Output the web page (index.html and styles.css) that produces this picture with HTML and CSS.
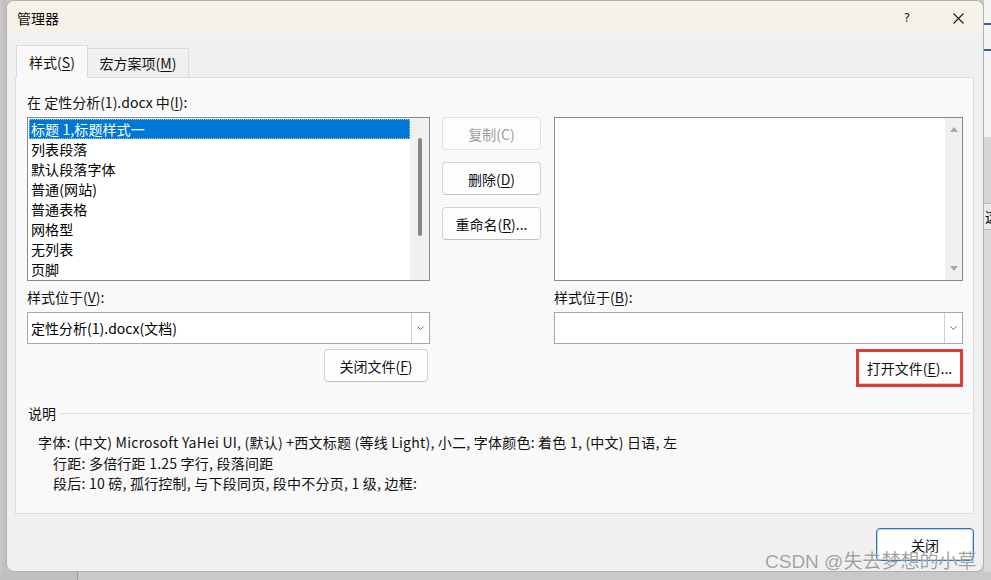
FILE: index.html
```html
<!DOCTYPE html>
<html lang="zh-CN">
<head>
<meta charset="utf-8">
<title>管理器</title>
<link rel="stylesheet" href="styles.css">
</head>
<body>
<div class="desk">
  <div class="main-row">
    <div class="strip-left"></div>
    <div class="dialog">
      <div class="titlebar">
        <span class="title">管理器</span>
        <span class="capbtn help">?</span>
        <span class="capbtn close-x">
          <svg width="11" height="11" viewBox="0 0 11 11"><path d="M0.5 0.5 L10.5 10.5 M10.5 0.5 L0.5 10.5" stroke="#1a1a1a" stroke-width="1.1" fill="none"/></svg>
        </span>
      </div>
      <div class="dbody">
        <div class="tabs">
          <div class="tab active">样式(<u>S</u>)</div>
          <div class="tab inactive">宏方案项(<u>M</u>)</div>
        </div>
        <div class="panel">
          <div class="grid">
            <div class="lbl c1 r1">在 定性分析(1).docx 中(<u>I</u>):</div>

            <div class="listbox c1 r2">
              <div class="items">
                <div class="item sel">标题 1,标题样式一</div>
                <div class="item">列表段落</div>
                <div class="item">默认段落字体</div>
                <div class="item">普通(网站)</div>
                <div class="item">普通表格</div>
                <div class="item">网格型</div>
                <div class="item">无列表</div>
                <div class="item">页脚</div>
              </div>
              <div class="vscroll">
                <div class="thumb"></div>
              </div>
            </div>

            <div class="midbtns c2 r2">
              <div class="btn disabled">复制(C)</div>
              <div class="btn">删除(<u>D</u>)</div>
              <div class="btn">重命名(<u>R</u>)...</div>
            </div>

            <div class="listbox c3 r2">
              <div class="items"></div>
              <div class="vscroll arrows">
                <span class="tri up"></span>
                <span class="tri down"></span>
              </div>
            </div>

            <div class="lbl c1 r3">样式位于(<u>V</u>):</div>
            <div class="lbl c3 r3">样式位于(<u>B</u>):</div>

            <div class="combo c1 r4">
              <span class="combo-text">定性分析(1).docx(文档)</span>
              <span class="drop"><svg width="7" height="4" viewBox="0 0 7 4"><path d="M0.5 0.5 L3.5 3.5 L6.5 0.5" stroke="#6a6a6a" stroke-width="1" fill="none"/></svg></span>
            </div>
            <div class="combo c3 r4">
              <span class="combo-text"></span>
              <span class="drop"><svg width="7" height="4" viewBox="0 0 7 4"><path d="M0.5 0.5 L3.5 3.5 L6.5 0.5" stroke="#6a6a6a" stroke-width="1" fill="none"/></svg></span>
            </div>

            <div class="c1 r5 btncell">
              <div class="btn closefile">关闭文件(<u>F</u>)</div>
            </div>
            <div class="c3 r5 btncell">
              <div class="redbox"><div class="btn openfile">打开文件(<u>E</u>)...</div></div>
            </div>
          </div>

          <div class="group">
            <div class="group-head"><span>说明</span><span class="gline"></span></div>
            <div class="desc">
              <div class="dl">字体: (中文) Microsoft YaHei UI, (默认) +西文标题 (等线 Light), 小二, 字体颜色: 着色 1, (中文) 日语, 左</div>
              <div class="dl indent">行距: 多倍行距 1.25 字行, 段落间距</div>
              <div class="dl indent">段后: 10 磅, 孤行控制, 与下段同页, 段中不分页, 1 级, 边框:</div>
            </div>
          </div>
        </div>
        <div class="footer">
          <div class="btn primary">关闭</div>
        </div>
      </div>
    </div>
    <div class="strip-right">
      <div class="sr a"></div>
      <div class="sr line"></div>
      <div class="sr b"></div>
      <div class="sr line"></div>
      <div class="sr c"></div>
      <div class="sr d"></div>
      <div class="sr box">这</div>
      <div class="sr e"></div>
    </div>
  </div>
  <div class="bottom-row">
    <div class="bb1"></div>
    <div class="bb2"></div>
    <div class="bb3"></div>
  </div>
  <div class="watermark">CSDN @失去梦想的小草</div>
</div>
</body>
</html>
```

FILE: styles.css
```css
html, body {
  margin: 0;
  padding: 0;
}
body {
  width: 991px;
  height: 580px;
  overflow: hidden;
  background: #c6c6c6;
  font-family: "Noto Sans CJK SC", "Microsoft YaHei UI", sans-serif;
  font-size: 14px;
  color: #000;
}
u {
  text-decoration: underline;
  text-underline-offset: 2px;
  text-decoration-thickness: 1px;
}
.desk {
  position: relative;
  width: 991px;
  height: 580px;
  display: flex;
  flex-direction: column;
}
.main-row {
  display: flex;
  height: 572px;
}
.strip-left {
  width: 6px;
  background: linear-gradient(to right, #cacaca, #bdbdbd);
}
.dialog {
  width: 978px;
  height: 572px;
  box-sizing: border-box;
  border: 1px solid #b0b0b0;
  border-radius: 8px;
  background: #f0f0f0;
  overflow: hidden;
  display: flex;
  flex-direction: column;
}
.titlebar {
  height: 34px;
  flex: none;
  background: #f6f2ea;
  display: flex;
  align-items: center;
  padding-left: 10px;
}
.title {
  flex: 1;
  font-size: 14px;
  color: #111;
}
.capbtn {
  height: 34px;
  display: flex;
  align-items: center;
  justify-content: center;
}
.help {
  width: 52px;
  font-family: "DejaVu Sans", sans-serif;
  font-size: 12px;
  color: #1a1a1a;
}
.close-x {
  width: 50px;
}
.dbody {
  flex: 1;
  display: flex;
  flex-direction: column;
  padding: 10px 9px 0 8px;
}
.tabs {
  display: flex;
  align-items: flex-end;
  height: 33px;
  padding-left: 1px;
  margin-bottom: -1px;
  position: relative;
  z-index: 1;
}
.tab {
  box-sizing: border-box;
  border: 1px solid #dadada;
  border-bottom: none;
  display: flex;
  align-items: center;
  justify-content: center;
  color: #111;
}
.tab.active {
  width: 72px;
  height: 33px;
  background: #f9f9f9;
}
.tab.inactive {
  width: 102px;
  height: 29px;
  margin-bottom: 1px;
  margin-left: -1px;
  background: #f0f0f0;
}
.panel {
  height: 437px;
  box-sizing: border-box;
  border: 1px solid #dcdcdc;
  background: #f9f9f9;
  padding: 14px 10px 0 11px;
}
.grid {
  display: grid;
  grid-template-columns: 403px 12px 99px 13px 409px;
  grid-template-rows: 25px 170px 25px 37px 40px;
}
.c1 { grid-column: 1; }
.c2 { grid-column: 3; }
.c3 { grid-column: 5; }
.r1 { grid-row: 1; }
.r2 { grid-row: 2; }
.r3 { grid-row: 3; }
.r4 { grid-row: 4; }
.r5 { grid-row: 5; }
.lbl {
  height: 20px;
  line-height: 20px;
  color: #111;
}
.listbox {
  height: 164px;
  box-sizing: border-box;
  border: 1px solid #8a8a8e;
  background: #fff;
  display: flex;
}
.items {
  flex: 1;
  padding: 1px 0 0 1px;
}
.item {
  height: 20px;
  line-height: 20px;
  padding-left: 2px;
  white-space: nowrap;
  letter-spacing: 0.1px;
}
.item.sel {
  background: #0078d7;
  color: #fff;
  outline: 1px dotted #9cc2ea;
  outline-offset: -1px;
}
.vscroll {
  width: 19px;
  background: #f0f0f0;
  display: flex;
  flex-direction: column;
  align-items: center;
}
.thumb {
  margin-top: 20px;
  margin-left: 1px;
  width: 4px;
  height: 98px;
  border-radius: 2px;
  background: #868686;
}
.vscroll.arrows {
  width: 17px;
  justify-content: space-between;
  padding: 9px 0 9px;
  box-sizing: border-box;
}
.tri {
  width: 0;
  height: 0;
  border-left: 4px solid transparent;
  border-right: 4px solid transparent;
}
.tri.up {
  border-bottom: 5px solid #a8a8a8;
}
.tri.down {
  border-top: 5px solid #a8a8a8;
}
.midbtns {
  display: flex;
  flex-direction: column;
  gap: 12px;
}
.btn {
  box-sizing: border-box;
  height: 33px;
  border: 1px solid #d3d3d3;
  border-bottom-color: #c2c2c2;
  border-radius: 4px;
  background: #fdfdfd;
  display: flex;
  align-items: center;
  justify-content: center;
  color: #111;
  white-space: nowrap;
}
.btn.disabled {
  color: #9e9e9e;
  border-color: #e0e0e0;
}
.combo {
  height: 32px;
  box-sizing: border-box;
  border: 1px solid #a8a8a8;
  background: #fff;
  display: flex;
  align-items: stretch;
}
.combo-text {
  flex: 1;
  padding-left: 3px;
  line-height: 30px;
  white-space: nowrap;
}
.drop {
  width: 18px;
  box-sizing: border-box;
  border-left: 1px solid #cfcfcf;
  display: flex;
  align-items: center;
  justify-content: center;
}
.btncell {
  display: flex;
  justify-content: flex-end;
  align-items: flex-start;
}
.closefile {
  width: 104px;
  margin-right: 2px;
}
.redbox {
  width: 107px;
  height: 38px;
  box-sizing: border-box;
  border: 3px solid #e03c3c;
  background: #fdfdfd;
}
.openfile {
  height: 32px;
  border: none;
  border-bottom: 1px solid #d0d0d0;
  border-radius: 0;
}
.group {
  margin-top: 14px;
}
.group-head {
  display: flex;
  align-items: center;
  height: 20px;
  padding-left: 1px;
  margin-right: -7px;
  color: #111;
}
.gline {
  flex: 1;
  margin-left: 4px;
  border-top: 1px solid #dcdcdc;
}
.desc {
  margin-top: 9px;
  padding-left: 11px;
  color: #111;
}
.dl {
  height: 20.5px;
  line-height: 20.5px;
  white-space: nowrap;
  letter-spacing: 0.22px;
}
.dl.indent {
  padding-left: 15px;
}
.footer {
  display: flex;
  justify-content: flex-end;
  padding-top: 14px;
}
.btn.primary {
  width: 98px;
  background: #fff;
  border: 1px solid #2a72c4;
  box-shadow: inset 0 0 0 1px rgba(42, 114, 196, 0.3);
}
.strip-right {
  width: 7px;
  display: flex;
  flex-direction: column;
  overflow: hidden;
}
.sr.a { height: 23px; background: #f4f4f4; }
.sr.line { height: 2px; background: #3f5e90; }
.sr.b { height: 24px; background: #f4f4f4; }
.sr.c { height: 86px; background: #f4f4f4; }
.sr.d { height: 66px; background: #d6d6d6; }
.sr.box {
  height: 27px;
  box-sizing: border-box;
  border-top: 1px solid #b8b8b8;
  border-bottom: 1px solid #b8b8b8;
  background: #ececec;
  font-size: 14px;
  line-height: 25px;
  white-space: nowrap;
  padding-left: 1px;
}
.sr.e { flex: 1; background: #d9d9d9; }
.bottom-row {
  display: flex;
  height: 8px;
}
.bb1 { width: 77px; background: #c1c1c1; }
.bb2 { width: 1px; background: #9a9a9a; }
.bb3 { flex: 1; background: #c9c9c9; }
.watermark {
  position: absolute;
  left: 765px;
  top: 551px;
  font-family: "Liberation Sans", "Noto Sans CJK SC", sans-serif;
  font-size: 19px;
  line-height: 22px;
  color: rgba(120, 120, 120, 0.7);
  text-shadow: 0 0 1px rgba(255, 255, 255, 0.9);
  white-space: nowrap;
}
```
